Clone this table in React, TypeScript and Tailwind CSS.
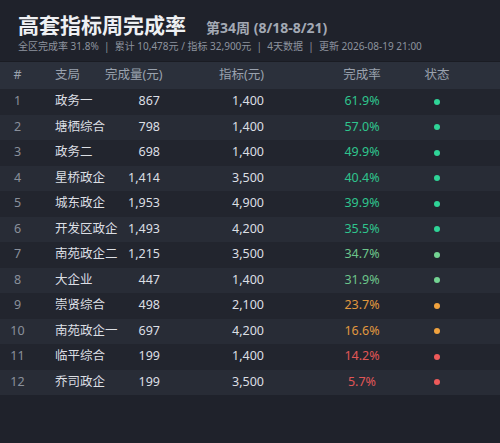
import React from 'react';

type Row = { name: string; done: string; target: string; rate: string; level: 'high' | 'mid' | 'warn' | 'low' };

const rows: Row[] = [
  { name: '政务一', done: '867', target: '1,400', rate: '61.9%', level: 'high' },
  { name: '塘栖综合', done: '798', target: '1,400', rate: '57.0%', level: 'high' },
  { name: '政务二', done: '698', target: '1,400', rate: '49.9%', level: 'high' },
  { name: '星桥政企', done: '1,414', target: '3,500', rate: '40.4%', level: 'high' },
  { name: '城东政企', done: '1,953', target: '4,900', rate: '39.9%', level: 'high' },
  { name: '开发区政企', done: '1,493', target: '4,200', rate: '35.5%', level: 'high' },
  { name: '南苑政企二', done: '1,215', target: '3,500', rate: '34.7%', level: 'mid' },
  { name: '大企业', done: '447', target: '1,400', rate: '31.9%', level: 'mid' },
  { name: '崇贤综合', done: '498', target: '2,100', rate: '23.7%', level: 'warn' },
  { name: '南苑政企一', done: '697', target: '4,200', rate: '16.6%', level: 'warn' },
  { name: '临平综合', done: '199', target: '1,400', rate: '14.2%', level: 'low' },
  { name: '乔司政企', done: '199', target: '3,500', rate: '5.7%', level: 'low' },
];

const rateText = {
  high: 'text-[#2fc48d]',
  mid: 'text-[#6cc48a]',
  warn: 'text-[#e0983f]',
  low: 'text-[#e05656]',
};

const dotBg = {
  high: 'bg-[#2fd497]',
  mid: 'bg-[#74d493]',
  warn: 'bg-[#f0a23e]',
  low: 'bg-[#ee5a5a]',
};

const cols = 'grid grid-cols-[35px_70px_55px_154px_96px_54px] items-center';

export default function App() {
  return (
    <div
      className="w-[500px] h-[443px] bg-[#1f222b] overflow-hidden"
      style={{ fontFamily: '"Noto Sans", "Noto Sans CJK SC", sans-serif' }}
    >
      <div className="px-[18px] pt-[10px] h-[61px]">
        <div className="flex items-baseline gap-[20px]">
          <h1 className="text-[21px] font-bold text-[#eef0f3] leading-[30px]">高套指标周完成率</h1>
          <span className="text-[14px] font-bold text-[#a3a9b4]">第34周 (8/18-8/21)</span>
        </div>
        <div className="text-[10px] text-[#8d939e] leading-[13px] whitespace-pre">
          全区完成率 31.8%  |  累计 10,478元 / 指标 32,900元  |  4天数据  |  更新 2026-08-19 21:00
        </div>
      </div>

      <div className="border-t border-[#1a1c23]">
        <div className={`${cols} h-[27px] bg-[#2b303b] text-[12.5px] text-[#9aa2ae] whitespace-nowrap`}>
          <div className="text-center">#</div>
          <div className="pl-[20px]">支局</div>
          <div className="text-right">完成量(元)</div>
          <div className="text-right pr-[50px]">指标(元)</div>
          <div className="text-center">完成率</div>
          <div className="text-center">状态</div>
        </div>

        {rows.map((r, i) => (
          <div
            key={r.name}
            className={`${cols} h-[25.5px] text-[12.5px] ${i % 2 === 0 ? 'bg-[#22252e]' : 'bg-[#282c36]'}`}
          >
            <div className="text-center text-[#8a909b]">{i + 1}</div>
            <div className="pl-[20px] text-[#dcdfe4] whitespace-nowrap">{r.name}</div>
            <div className="text-right text-[#dcdfe4]">{r.done}</div>
            <div className="text-right pr-[50px] text-[#dcdfe4]">{r.target}</div>
            <div className={`text-center ${rateText[r.level]}`}>{r.rate}</div>
            <div className="flex justify-center">
              <span className={`w-[6px] h-[6px] rounded-full ${dotBg[r.level]}`} />
            </div>
          </div>
        ))}
      </div>
    </div>
  );
}
